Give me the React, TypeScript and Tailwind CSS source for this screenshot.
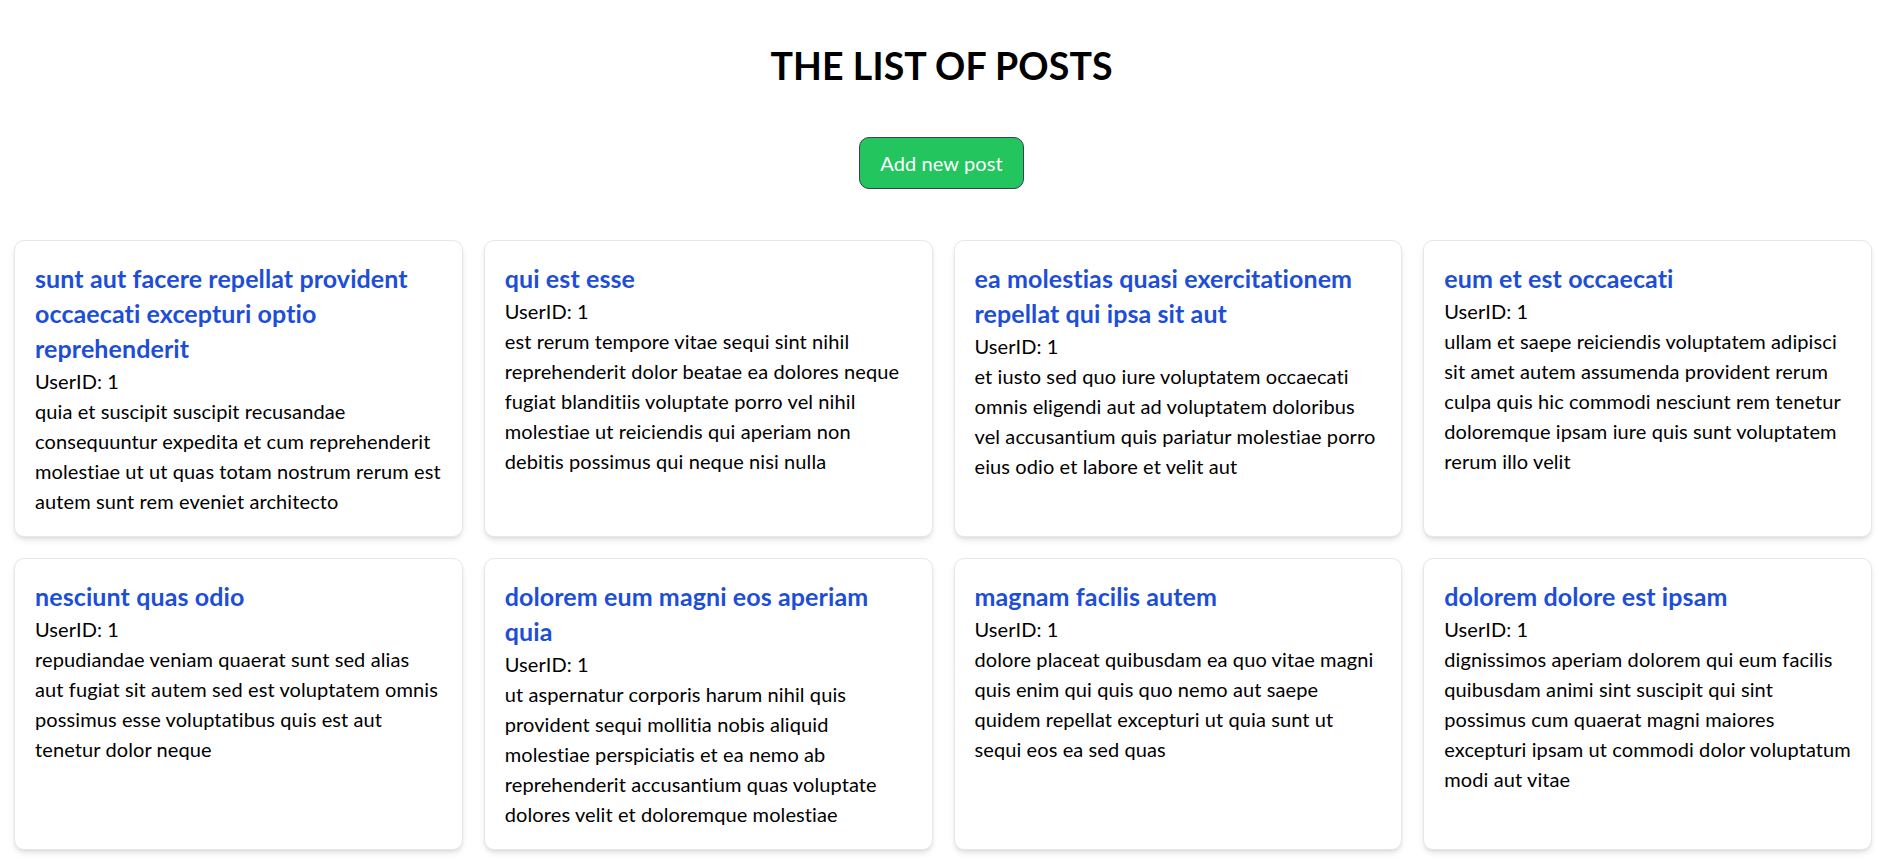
import React from "react";

type Post = { id: number; userId: number; title: string; body: string };

const posts: Post[] = [
  {
    id: 1,
    userId: 1,
    title: "sunt aut facere repellat provident occaecati excepturi optio reprehenderit",
    body: "quia et suscipit suscipit recusandae consequuntur expedita et cum reprehenderit molestiae ut ut quas totam nostrum rerum est autem sunt rem eveniet architecto",
  },
  {
    id: 2,
    userId: 1,
    title: "qui est esse",
    body: "est rerum tempore vitae sequi sint nihil reprehenderit dolor beatae ea dolores neque fugiat blanditiis voluptate porro vel nihil molestiae ut reiciendis qui aperiam non debitis possimus qui neque nisi nulla",
  },
  {
    id: 3,
    userId: 1,
    title: "ea molestias quasi exercitationem repellat qui ipsa sit aut",
    body: "et iusto sed quo iure voluptatem occaecati omnis eligendi aut ad voluptatem doloribus vel accusantium quis pariatur molestiae porro eius odio et labore et velit aut",
  },
  {
    id: 4,
    userId: 1,
    title: "eum et est occaecati",
    body: "ullam et saepe reiciendis voluptatem adipisci sit amet autem assumenda provident rerum culpa quis hic commodi nesciunt rem tenetur doloremque ipsam iure quis sunt voluptatem rerum illo velit",
  },
  {
    id: 5,
    userId: 1,
    title: "nesciunt quas odio",
    body: "repudiandae veniam quaerat sunt sed alias aut fugiat sit autem sed est voluptatem omnis possimus esse voluptatibus quis est aut tenetur dolor neque",
  },
  {
    id: 6,
    userId: 1,
    title: "dolorem eum magni eos aperiam quia",
    body: "ut aspernatur corporis harum nihil quis provident sequi mollitia nobis aliquid molestiae perspiciatis et ea nemo ab reprehenderit accusantium quas voluptate dolores velit et doloremque molestiae",
  },
  {
    id: 7,
    userId: 1,
    title: "magnam facilis autem",
    body: "dolore placeat quibusdam ea quo vitae magni quis enim qui quis quo nemo aut saepe quidem repellat excepturi ut quia sunt ut sequi eos ea sed quas",
  },
  {
    id: 8,
    userId: 1,
    title: "dolorem dolore est ipsam",
    body: "dignissimos aperiam dolorem qui eum facilis quibusdam animi sint suscipit qui sint possimus cum quaerat magni maiores excepturi ipsam ut commodi dolor voluptatum modi aut vitae",
  },
];

function PostCard({ post }: { post: Post }) {
  return (
    <div className="bg-white border border-[#e5e7eb] rounded-[10px] shadow-md p-[20px]">
      <h2 className="text-[25px] leading-[35px] font-bold text-[#1d4ed8]">
        {post.title}
      </h2>
      <p className="text-[20px] leading-[30px]">UserID: {post.userId}</p>
      <p className="text-[20px] leading-[30px]">{post.body}</p>
    </div>
  );
}

export default function App() {
  return (
    <div className="min-h-screen bg-white text-black font-['Lato',sans-serif] [font-variant-ligatures:none] tracking-[0.1px] pt-[43px] pb-[14px]">
      <h1 className="text-center text-[37.5px] leading-[45px] font-bold">
        THE LIST OF POSTS
      </h1>

      <div className="flex justify-center mt-[49px]">
        <button className="bg-[#22c55e] text-white text-[20px] leading-[30px] px-[20px] py-[10px] border border-[#374151] rounded-[10px]">
          Add new post
        </button>
      </div>

      <div className="grid grid-cols-4 gap-[21px] mt-[51px] pl-[14px] pr-[11px]">
        {posts.map((post) => (
          <PostCard key={post.id} post={post} />
        ))}
      </div>
    </div>
  );
}
